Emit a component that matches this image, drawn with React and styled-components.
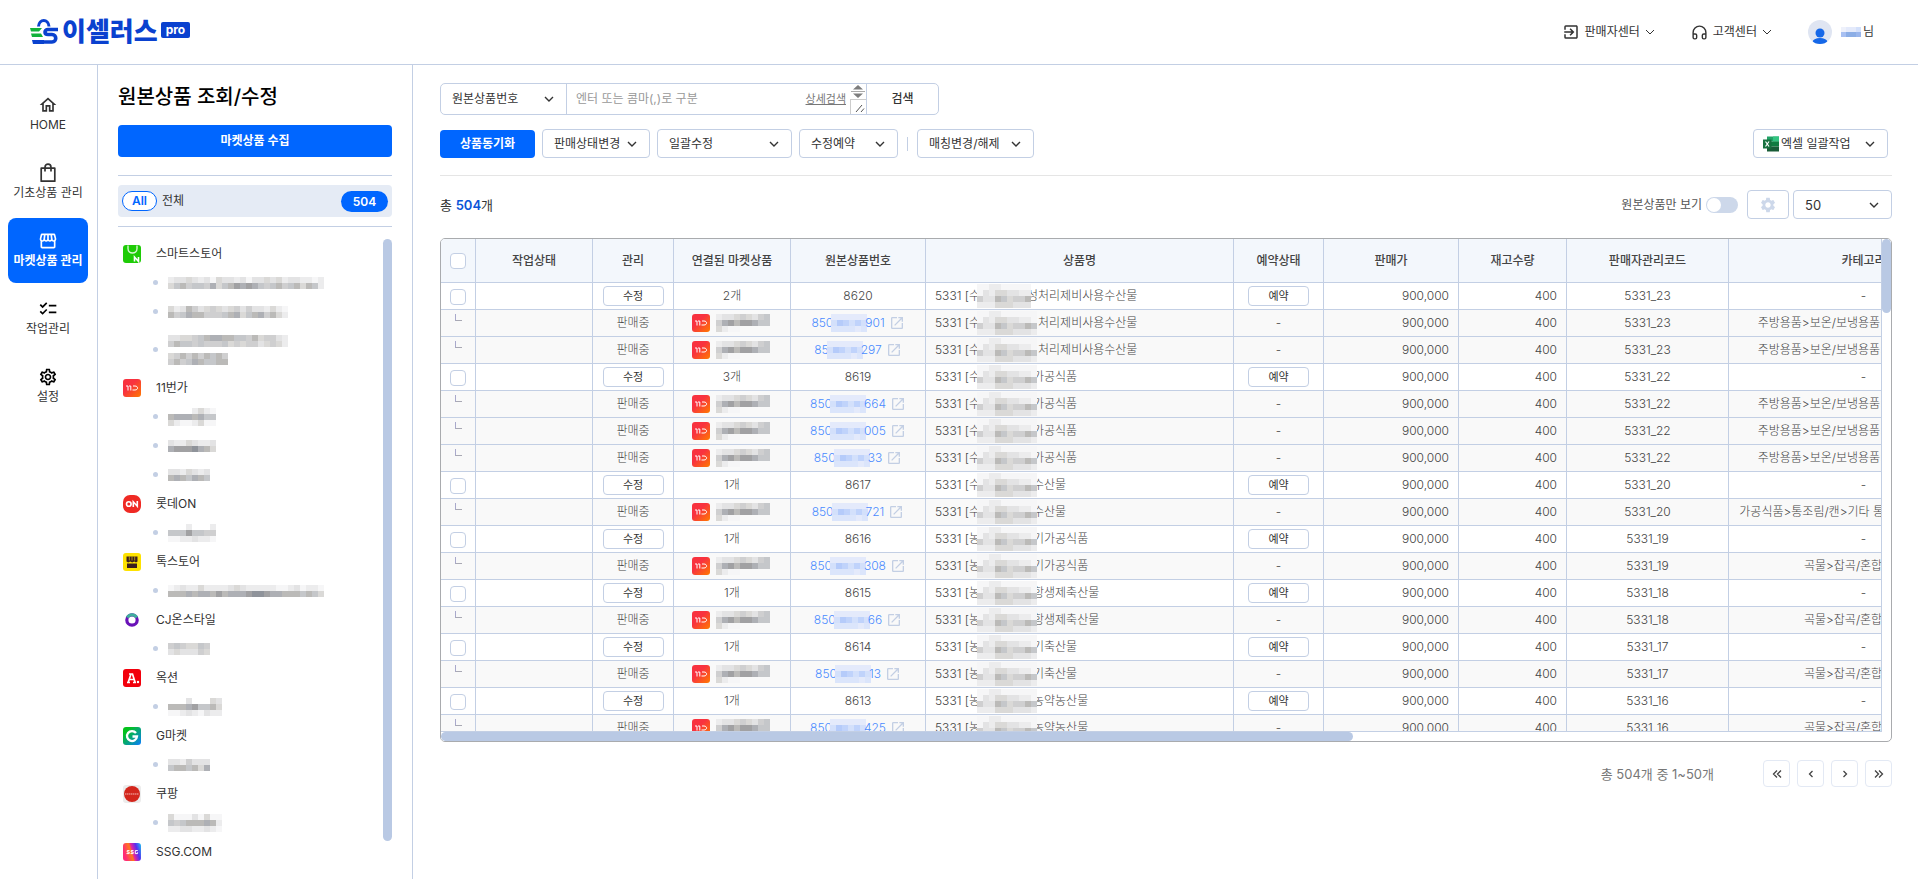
import React, { useState } from 'react'
import styled, { createGlobalStyle } from 'styled-components'
import {
  MdOutlineHome,
  MdOutlineStorefront,
  MdChecklist,
  MdOutlineSettings,
  MdExitToApp,
  MdOpenInNew,
  MdSettings,
} from 'react-icons/md'
import { Headphones } from 'lucide-react'

const grayTones = ['#f6f6f7', '#ececed', '#e3e3e4', '#dad9d7', '#cfcfd0', '#c5c7ca', '#bbbab8', '#aeb0b5', '#a1a1a3', '#8f939a']
const blueTones = ['#eef1fb', '#e4eafb', '#dbe5fb', '#d3e0fb', '#cbdafb', '#c0d3fb', '#b5cbfa', '#a8c0f2', '#9ab6ec', '#8caee6']

// 개인정보 가림용 모자이크
function Mosaic({ rows, tone, size = 6, label = '비공개' }) {
  const tones = tone === 'blue' ? blueTones : grayTones
  const width = Math.max(...rows.map((row) => row.length)) * size
  return (
    <svg width={width} height={rows.length * size} role="img" aria-label={label} shapeRendering="crispEdges">
      {rows.map((row, y) =>
        row.split('').map((cell, x) =>
          cell === ' ' ? null : (
            <rect key={`${x}-${y}`} x={x * size} y={y * size} width={size} height={size} fill={tones[Number(cell)]} />
          ),
        ),
      )}
    </svg>
  )
}

function Chevron({ thin }) {
  return (
    <svg width="10" height="6" viewBox="0 0 10 6" fill="none" aria-hidden="true">
      <path d="M1 1l4 4 4-4" stroke="#333" strokeWidth={thin ? 1 : 1.4} />
    </svg>
  )
}

function BagIcon() {
  return (
    <svg width="20" height="20" viewBox="0 0 20 20" fill="none" stroke="#333" strokeWidth="1.7" aria-hidden="true">
      <path d="M3.2 5.2h13.6v13H3.2z" strokeLinejoin="round" />
      <path d="M7 8.4V4.4c0-4.3 6-4.3 6 0v4" />
    </svg>
  )
}

function LogoMark() {
  return (
    <svg width="30" height="26" viewBox="0 0 30 26" fill="none" aria-hidden="true">
      <path d="M9.5 7.5C10 -0.5 19.5 -0.5 20 7.5" stroke="#0a41cf" strokeWidth="3" />
      <path d="M1 9h12l-3 3.5H2z" fill="#12b23a" />
      <path d="M2 14.5h10l2 3.5H3z" fill="#12b23a" />
      <path d="M3 21h12v4H4z" fill="#0a41cf" />
      <path d="M29 10.5H19c-4 0-4 5 0 5h4c5 0 5 7.5 0 7.5H5" stroke="#0a41cf" strokeWidth="3.6" />
    </svg>
  )
}

function ElevenIcon() {
  return (
    <svg width="18" height="18" viewBox="0 0 18 18" fill="none" aria-hidden="true">
      <defs>
        <linearGradient id="eleven" x1="0" y1="0" x2="1" y2="1">
          <stop offset="0.4" stopColor="#f8323f" />
          <stop offset="1" stopColor="#ff7a00" />
        </linearGradient>
      </defs>
      <rect width="18" height="18" rx="3" fill="url(#eleven)" />
      <path d="M3 7h2v4.5M6 7h1.8v4.5M10 7h2c3.4 0 3.4 4 0 4H9.500" stroke="#fff" strokeWidth="1" />
    </svg>
  )
}

function MarketIcon({ type }) {
  if (type === 'eleven') return <ElevenIcon />
  return (
    <svg width="18" height="18" viewBox="0 0 18 18" fill="none" aria-hidden="true">
      {type === 'smart' && (
        <>
          <rect width="18" height="18" rx="3" fill="#1ecb06" />
          <path d="M5 0.5v3c0 6 9 6 9 0v-3" stroke="#d5f7d0" strokeWidth="1.4" />
          <path d="M11.5 16.5v-4.5l4 4.5v-4.5" stroke="#fff" strokeWidth="1.6" />
        </>
      )}
      {type === 'lotte' && (
        <>
          <rect width="18" height="18" rx="7" fill="#ef2a24" />
          <circle cx="5.8" cy="9" r="2.3" stroke="#fff" strokeWidth="1.6" />
          <path d="M10.3 12V6.8l4 4.4V6" stroke="#fff" strokeWidth="1.6" />
        </>
      )}
      {type === 'talk' && (
        <>
          <rect width="18" height="18" rx="3" fill="#fee200" />
          <path d="M3.5 3.5h11v5l-1.5 1-1.8-1-2 1-2-1-2 1-1.7-1zM4 10.5h10v4.5H4z" fill="#3b1e1e" />
          <path d="M6.3 3.5v4M9 3.5v4M11.7 3.5v4" stroke="#fee200" strokeWidth="0.6" />
        </>
      )}
      {type === 'cj' && (
        <>
          <circle cx="9" cy="9" r="5.2" stroke="#6a12b8" strokeWidth="3.2" />
          <path d="M4.3 6.4a5.4 5.4 0 0 1 9.4 0" stroke="#3fae9d" strokeWidth="3" />
        </>
      )}
      {type === 'auction' && (
        <>
          <rect width="18" height="18" rx="3" fill="#f2000c" />
          <path d="M4 13.5h3M10 13.5h3M5.3 13l2.7-8h1.5l2.5 8M6.5 10.5h4M6 5h3" stroke="#fff" strokeWidth="1.7" />
          <circle cx="15" cy="13" r="1.2" fill="#fff" />
        </>
      )}
      {type === 'gmarket' && (
        <>
          <defs>
            <linearGradient id="gmarket" x1="0" y1="0" x2="1" y2="1">
              <stop offset="0.2" stopColor="#04c21c" />
              <stop offset="1" stopColor="#0a7cff" />
            </linearGradient>
          </defs>
          <rect width="18" height="18" rx="3" fill="url(#gmarket)" />
          <path d="M13 6a5 5 0 1 0 1 3.5H9.5" stroke="#fff" strokeWidth="2.3" />
        </>
      )}
      {type === 'coupang' && (
        <>
          <rect width="18" height="18" rx="3" fill="#ececec" />
          <circle cx="9" cy="9" r="8" fill="#d3261c" />
          <path d="M2 9h14" stroke="#f4b7b2" strokeWidth="1.2" strokeDasharray="1.5 0.5" />
        </>
      )}
      {type === 'ssg' && (
        <>
          <defs>
            <linearGradient id="ssg" x1="0" y1="0.3" x2="1" y2="0">
              <stop offset="0" stopColor="#ff2b77" />
              <stop offset="0.35" stopColor="#ff7a1a" />
              <stop offset="0.45" stopColor="#e8259d" />
              <stop offset="0.7" stopColor="#5b2df0" />
              <stop offset="1" stopColor="#1bc7f0" />
            </linearGradient>
          </defs>
          <rect width="18" height="18" rx="3" fill="url(#ssg)" />
          <path
            d="M6.500 7.600H4.200v1.500h2v1.500H3.500M10.500 7.600H8.200v1.500h2v1.500H7.500M14.800 7.600h-2.500v3h2.300V9.300"
            stroke="#fff"
            strokeWidth="1"
          />
        </>
      )}
    </svg>
  )
}

function ExcelIcon() {
  return (
    <svg width="16" height="16" viewBox="0 0 16 16" aria-hidden="true">
      <path d="M4 0.5h12v5H4z" fill="#21a366" />
      <path d="M10 0.5h6v5h-6z" fill="#33c481" />
      <path d="M4 5.5h12v5H4z" fill="#107c41" />
      <path d="M4 10.5h12v5H4z" fill="#185c37" />
      <path d="M0 3.5h8.5v9H0z" fill="#17703f" />
      <path d="M2.5 5.5l3.5 5M6 5.5l-3.5 5" stroke="#fff" strokeWidth="1.2" />
    </svg>
  )
}

function AvatarIcon() {
  return (
    <svg width="24" height="24" viewBox="0 0 24 24" aria-hidden="true">
      <clipPath id="avatar">
        <circle cx="12" cy="12" r="12" />
      </clipPath>
      <circle cx="12" cy="12" r="12" fill="#dfe5f2" />
      <g clipPath="url(#avatar)" fill="#1668e8">
        <circle cx="12" cy="13" r="4.5" />
        <ellipse cx="12" cy="22" rx="7.5" ry="4" />
      </g>
    </svg>
  )
}

const menus = [
  { label: 'HOME', icon: <MdOutlineHome size={20} /> },
  { label: '기초상품 관리', icon: <BagIcon /> },
  { label: '마켓상품 관리', icon: <MdOutlineStorefront size={20} />, active: true },
  { label: '작업관리', icon: <MdChecklist size={22} color="#000" /> },
  { label: '설정', icon: <MdOutlineSettings size={22} color="#000" /> },
]

const markets = [
  {
    name: '스마트스토어',
    type: 'smart',
    accounts: [
      ['12232120322120223231221101', '35645547356878754564563651'],
      ['31264234323424221310', '64576644456735674631'],
      ['22334567766554634421', '46554544453434423431', '3464646564'],
    ],
  },
  { name: '11번가', type: 'eleven', accounts: [['    1310', '67776755', '31001300'], ['21132112', '78889763'], ['2213212', '6765765']] },
  { name: '롯데ON', type: 'lotte', accounts: [['   1   1', '55585544', '00112110']] },
  { name: '톡스토어', type: 'talk', accounts: [['01211311112321111100120110', '66676776867778998776665653']] },
  { name: 'CJ온스타일', type: 'cj', accounts: [['4543354', '2322243']] },
  { name: '옥션', type: 'auction', accounts: [['   2   32', '666785563', '001210211']] },
  { name: 'G마켓', type: 'gmarket', accounts: [['2214222', '5665637']] },
  { name: '쿠팡', type: 'coupang', accounts: [['300020300', '545666761', '112211210']] },
  { name: 'SSG.COM', type: 'ssg', accounts: [] },
]

const kitchen = '주방용품>보온/보냉용품>보온/보냉도시락'
const canned = '가공식품>통조림/캔>기타 통조림/캔>기타 통조림'
const grain = '곡물>잡곡/혼합곡>기타'

const products = [
  { no: '8620', code: '5331_23', head: '수', tail: '성처리제비사용수산물', category: kitchen, links: [['850', '901'], ['85', '297']] },
  { no: '8619', code: '5331_22', head: '수', tail: '가공식품', category: kitchen, links: [['850', '664'], ['850', '005'], ['850', '33']] },
  { no: '8617', code: '5331_20', head: '수', tail: '수산물', category: canned, links: [['850', '721']] },
  { no: '8616', code: '5331_19', head: '농', tail: '기가공식품', category: grain, links: [['850', '308']] },
  { no: '8615', code: '5331_18', head: '농', tail: '항생제축산물', category: grain, links: [['850', '66']] },
  { no: '8614', code: '5331_17', head: '농', tail: '기축산물', category: grain, links: [['850', '13']] },
  { no: '8613', code: '5331_16', head: '농', tail: '농약농산물', category: grain, links: [['850', '425']] },
]

const columns = [
  { title: '작업상태', width: 117 },
  { title: '관리', width: 81 },
  { title: '연결된 마켓상품', width: 117 },
  { title: '원본상품번호', width: 135 },
  { title: '상품명', width: 308 },
  { title: '예약상태', width: 90 },
  { title: '판매가', width: 135 },
  { title: '재고수량', width: 108 },
  { title: '판매자관리코드', width: 162 },
  { title: '카테고리', width: 270 },
]

const nameMask = ['0011000000', '0213322110', '4226534465', '1113332221']
const shortNameMask = nameMask.map((row) => row.slice(0, 9))

function ProductName({ head, tail, sub }) {
  const long = tail.length > 8
  return (
    <NameCell>
      <span>5331 [{head}</span>
      <NameMask $overlap={long && sub ? 10 : 4}>
        <Mosaic rows={long && !sub ? shortNameMask : nameMask} />
      </NameMask>
      <span>{tail}</span>
    </NameCell>
  )
}

function ProductRows({ product }) {
  return (
    <>
      <Row>
        <Cell>
          <CheckBox type="checkbox" aria-label={`${product.no} 선택`} />
        </Cell>
        <Cell />
        <Cell>
          <CellButton type="button">수정</CellButton>
        </Cell>
        <Cell>{product.links.length}개</Cell>
        <Cell>{product.no}</Cell>
        <Cell $align="left">
          <ProductName head={product.head} tail={product.tail} />
        </Cell>
        <Cell>
          <CellButton type="button">예약</CellButton>
        </Cell>
        <Cell $align="right">900,000</Cell>
        <Cell $align="right">400</Cell>
        <Cell>{product.code}</Cell>
        <Cell>-</Cell>
      </Row>
      {product.links.map(([start, end]) => (
        <Row key={start + end} $sub>
          <Cell>
            <Branch />
          </Cell>
          <Cell />
          <Cell>판매중</Cell>
          <Cell>
            <Seller>
              <ElevenIcon />
              <Mosaic rows={['122343245', '478688755', '3100     ']} />
            </Seller>
          </Cell>
          <Cell>
            <OriginLink href="#">
              {start}
              <LinkMask>
                <Mosaic tone="blue" rows={['111111', '365353', '222212']} />
              </LinkMask>
              {end}
              <MdOpenInNew size={16} color="#c3cfe4" />
            </OriginLink>
          </Cell>
          <Cell $align="left">
            <ProductName head={product.head} tail={product.tail} sub />
          </Cell>
          <Cell>-</Cell>
          <Cell $align="right">900,000</Cell>
          <Cell $align="right">400</Cell>
          <Cell>{product.code}</Cell>
          <Cell>{product.category}</Cell>
        </Row>
      ))}
    </>
  )
}

function SelectField({ label, options, width, attached, size }) {
  return (
    <SelectBox $width={width} $attached={attached}>
      <Select aria-label={label} $size={size}>
        {options.map((option) => (
          <option key={option}>{option}</option>
        ))}
      </Select>
      <Chevron />
    </SelectBox>
  )
}

export default function App() {
  const [onlyOrigin, setOnlyOrigin] = useState(false)

  return (
    <Page>
      <GlobalStyle />
      <Header>
        <Logo href="#">
          <LogoMark />
          <strong>이셀러스</strong>
          <span>pro</span>
        </Logo>
        <HeaderMenu>
          <HeaderButton type="button">
            <MdExitToApp size={18} />
            판매자센터
            <Chevron thin />
          </HeaderButton>
          <HeaderButton type="button">
            <Headphones size={17} />
            고객센터
            <Chevron thin />
          </HeaderButton>
          <User>
            <AvatarIcon />
            <UserName>
              <Mosaic tone="blue" rows={['0113', '7998']} size={5} />님
            </UserName>
          </User>
        </HeaderMenu>
      </Header>

      <Body>
        <Nav>
          {menus.map((menu) => (
            <NavItem key={menu.label} href="#" $active={menu.active}>
              {menu.icon}
              <span>{menu.label}</span>
            </NavItem>
          ))}
        </Nav>

        <Side>
          <h1>원본상품 조회/수정</h1>
          <CollectButton type="button">마켓상품 수집</CollectButton>
          <AllBox>
            <AllButton type="button">
              <em>All</em>
              전체
              <strong>504</strong>
            </AllButton>
          </AllBox>
          <MarketArea>
            <MarketList>
              {markets.map((market) => (
                <li key={market.name}>
                  <MarketName>
                    <MarketIcon type={market.type} />
                    <span>{market.name}</span>
                  </MarketName>
                  {market.accounts.map((rows, index) => {
                    const folded = market.type === 'smart' && index === 2
                    return (
                      <Account key={index} $tall={folded}>
                        <Mosaic rows={folded ? rows.slice(0, 2) : rows} />
                        {folded && <Mosaic rows={[rows[2], '4645765566']} />}
                      </Account>
                    )
                  })}
                </li>
              ))}
            </MarketList>
            <SideThumb />
          </MarketArea>
        </Side>

        <Main>
          <SearchBar>
            <SelectField label="검색 조건" options={['원본상품번호']} width={126} attached />
            <SearchText aria-label="검색어" rows={1} placeholder="엔터 또는 콤마(,)로 구분" />
            <DetailLink href="#">상세검색</DetailLink>
            <Resizer>
              <svg width="16" height="30" viewBox="0 0 16 30" aria-hidden="true">
                <path d="M3 5.5L8 1l5 4.5zM3 9.5L8 14l5-4.5z" fill="#7d7d7d" />
                <path d="M1 7.5h14" stroke="#aaa" />
                <path d="M0 15.5h16M0.5 15v15" stroke="#ccc" />
                <path d="M6 28l6-7M11 28l3-3.5" stroke="#555" fill="none" />
              </svg>
            </Resizer>
            <SearchButton type="button">검색</SearchButton>
          </SearchBar>

          <Toolbar>
            <SyncButton type="button">상품동기화</SyncButton>
            <SelectField label="판매상태변경" options={['판매상태변경']} width={108} />
            <SelectField label="일괄수정" options={['일괄수정']} width={135} />
            <SelectField label="수정예약" options={['수정예약']} width={99} />
            <Divider />
            <SelectField label="매칭변경/해제" options={['매칭변경/해제']} width={117} />
            <ExcelButton type="button">
              <ExcelIcon />
              <span>엑셀 일괄작업</span>
              <Chevron />
            </ExcelButton>
          </Toolbar>

          <ListHeader>
            <Total>
              총 <strong>504</strong>개
            </Total>
            <ToggleLabel>
              원본상품만 보기
              <Toggle
                type="checkbox"
                role="switch"
                checked={onlyOrigin}
                onChange={(e) => setOnlyOrigin(e.target.checked)}
              />
            </ToggleLabel>
            <GearButton type="button" aria-label="설정">
              <MdSettings size={18} />
            </GearButton>
            <SelectField label="페이지당 개수" options={['50', '100']} width={99} size={13} />
          </ListHeader>

          <TableFrame>
            <TableScroll>
              <Table>
                <colgroup>
                  <Col $width={35} />
                  {columns.map((column) => (
                    <Col key={column.title} $width={column.width} />
                  ))}
                </colgroup>
                <thead>
                  <tr>
                    <HeadCell>
                      <CheckBox type="checkbox" aria-label="전체 선택" />
                    </HeadCell>
                    {columns.map((column) => (
                      <HeadCell key={column.title}>{column.title}</HeadCell>
                    ))}
                  </tr>
                </thead>
                <tbody>
                  {products.map((product) => (
                    <ProductRows key={product.no} product={product} />
                  ))}
                </tbody>
              </Table>
            </TableScroll>
            <VerticalTrack>
              <VerticalThumb />
            </VerticalTrack>
            <HorizontalTrack>
              <HorizontalThumb />
            </HorizontalTrack>
          </TableFrame>

          <Pagination aria-label="페이지">
            <p>총 504개 중 1~50개</p>
            <PageButton type="button" aria-label="처음">
              <svg width="10" height="10" viewBox="0 0 10 10"><path d="M5 1.5L1.5 5 5 8.5M9 1.5L5.5 5 9 8.5" /></svg>
            </PageButton>
            <PageButton type="button" aria-label="이전">
              <svg width="10" height="10" viewBox="0 0 10 10"><path d="M6.5 2L3.5 5l3 3" /></svg>
            </PageButton>
            <PageButton type="button" aria-label="다음">
              <svg width="10" height="10" viewBox="0 0 10 10"><path d="M3.5 2l3 3-3 3" /></svg>
            </PageButton>
            <PageButton type="button" aria-label="마지막">
              <svg width="10" height="10" viewBox="0 0 10 10"><path d="M1 1.5L4.5 5 1 8.5M5 1.5L8.5 5 5 8.5" /></svg>
            </PageButton>
          </Pagination>
        </Main>
      </Body>
    </Page>
  )
}

const GlobalStyle = createGlobalStyle`
  * {
    box-sizing: border-box;
  }
  body {
    margin: 0;
    background: white;
    color: #333;
    font-family: Inter, 'Noto Sans CJK KR', sans-serif;
    font-size: 12px;
    line-height: 18px;
  }
  h1, p, ul {
    margin: 0;
    padding: 0;
  }
  ul {
    list-style: none;
  }
  a {
    color: inherit;
    text-decoration: none;
  }
  button, select, textarea, input {
    margin: 0;
    color: inherit;
    font: inherit;
  }
  button {
    padding: 0;
    cursor: pointer;
  }
  svg {
    flex-shrink: 0;
  }
`

const Page = styled.div`
  height: 100vh;
  display: flex;
  flex-direction: column;
  overflow: hidden;
`

const Header = styled.header`
  height: 65px;
  padding: 0 44px 0 29px;
  border-bottom: 1px solid #c3cfe4;
  display: flex;
  align-items: center;
  justify-content: space-between;
  flex-shrink: 0;
`

const Logo = styled.a`
  display: flex;
  align-items: center;
  gap: 3px;
  color: #0a41cf;

  strong {
    font-size: 26px;
    line-height: 28px;
    font-weight: 900;
  }
  span {
    align-self: flex-start;
    margin-top: 4px;
    padding: 0 5px;
    border-radius: 2px;
    background: #0a41cf;
    color: white;
    font-size: 12px;
    line-height: 16px;
    font-weight: 700;
  }
`

const HeaderMenu = styled.div`
  display: flex;
  align-items: center;
  gap: 36px;
`

const HeaderButton = styled.button`
  border: none;
  background: none;
  display: flex;
  align-items: center;
  gap: 5px;
`

const User = styled.div`
  display: flex;
  align-items: center;
  gap: 9px;
`

const UserName = styled.span`
  display: flex;
  align-items: center;
  gap: 2px;
`

const Body = styled.div`
  flex: 1;
  min-height: 0;
  display: flex;
`

const Nav = styled.nav`
  width: 98px;
  padding: 17px 9px 0 8px;
  border-right: 1px solid #c3cfe4;
  display: flex;
  flex-direction: column;
  gap: 3px;
  flex-shrink: 0;
`

const NavItem = styled.a`
  height: 65px;
  padding-top: 13px;
  border-radius: 8px;
  display: flex;
  flex-direction: column;
  align-items: center;
  gap: 1px;
  background: ${(props) => (props.$active ? '#0066ff' : 'transparent')};
  color: ${(props) => (props.$active ? 'white' : '#333')};
  font-weight: ${(props) => (props.$active ? 700 : 400)};
  white-space: nowrap;

  svg {
    height: 20px;
  }
`

const Side = styled.aside`
  width: 315px;
  padding: 20px 20px 0;
  border-right: 1px solid #c3cfe4;
  display: flex;
  flex-direction: column;
  flex-shrink: 0;

  h1 {
    font-size: 20px;
    line-height: 24px;
    font-weight: 500;
    color: black;
  }
`

const CollectButton = styled.button`
  height: 32px;
  margin-top: 16px;
  border: none;
  border-radius: 4px;
  background: #0066ff;
  color: white;
  font-weight: 700;
  flex-shrink: 0;
`

const AllBox = styled.div`
  margin-top: 18px;
  padding: 9px 0;
  border-top: 1px solid #c3cfe4;
  border-bottom: 1px solid #c3cfe4;
`

const AllButton = styled.button`
  width: 100%;
  height: 32px;
  padding: 0 4px;
  border: none;
  border-radius: 4px;
  background: #e5ebf5;
  display: flex;
  align-items: center;
  gap: 5px;

  em {
    width: 35px;
    border: 1px solid #0066ff;
    border-radius: 10px;
    background: white;
    color: #0066ff;
    font-style: normal;
    font-weight: 600;
  }
  strong {
    width: 47px;
    margin-left: auto;
    border-radius: 11px;
    background: #0066ff;
    color: white;
    line-height: 21px;
    font-weight: 600;
  }
`

const MarketArea = styled.div`
  flex: 1;
  min-height: 0;
  padding-top: 12px;
  display: flex;
  justify-content: space-between;
`

const MarketList = styled.ul`
  padding-left: 5px;
  overflow: hidden;
`

const MarketName = styled.div`
  height: 29px;
  display: flex;
  align-items: center;
  gap: 15px;
`

const Account = styled.div`
  height: ${(props) => (props.$tall ? 47 : 29)}px;
  padding-left: 30px;
  display: grid;
  grid-template-columns: 15px auto;
  align-items: center;
  align-content: center;
  justify-content: start;
  row-gap: 6px;

  &::before {
    content: '';
    width: 5px;
    height: 5px;
    border-radius: 50%;
    background: #c3cfe4;
    grid-row: ${(props) => (props.$tall ? '1 / 3' : '1')};
  }
`

const SideThumb = styled.div`
  width: 9px;
  height: 94%;
  border-radius: 5px;
  background: #b9c9e4;
`

const Main = styled.main`
  flex: 1;
  min-width: 0;
  padding: 18px 26px 0 27px;
`

const SearchBar = styled.div`
  width: 499px;
  height: 32px;
  border: 1px solid #c3cfe4;
  border-radius: 5px;
  display: flex;
  align-items: stretch;
`

const SearchText = styled.textarea`
  flex: 1;
  min-width: 0;
  padding: 6px 9px;
  border: none;
  outline: none;
  background: none;
  resize: none;
  overflow: hidden;

  &::placeholder {
    color: #999;
  }
`

const DetailLink = styled.a`
  align-self: center;
  margin-right: 4px;
  color: #777;
  font-size: 11px;
  text-decoration: underline;
`

const Resizer = styled.span`
  width: 17px;
  border-right: 1px solid #c3cfe4;
  display: flex;
`

const SearchButton = styled.button`
  width: 71px;
  border: none;
  background: none;
  font-weight: 500;
`

const SelectBox = styled.div`
  width: ${(props) => props.$width}px;
  height: ${(props) => (props.$attached ? 'auto' : '29px')};
  border: solid #c3cfe4;
  border-width: ${(props) => (props.$attached ? '0 1px 0 0' : '1px')};
  border-radius: ${(props) => (props.$attached ? '0' : '4px')};
  display: grid;
  align-items: center;
  flex-shrink: 0;

  svg {
    grid-area: 1 / 1;
    justify-self: end;
    margin-right: 12px;
    pointer-events: none;
  }
`

const Select = styled.select`
  grid-area: 1 / 1;
  width: 100%;
  height: 100%;
  padding: 0 24px 0 11px;
  border: none;
  outline: none;
  background: none;
  appearance: none;
  font-size: ${(props) => props.$size || 12}px;
`

const Toolbar = styled.div`
  margin-top: 14px;
  padding-bottom: 17px;
  border-bottom: 1px solid #e5e5e5;
  display: flex;
  align-items: center;
  gap: 7px;
`

const SyncButton = styled.button`
  width: 95px;
  height: 28px;
  border: none;
  border-radius: 4px;
  background: #0066ff;
  color: white;
  font-weight: 700;
`

const Divider = styled.span`
  width: 1px;
  height: 14px;
  margin: 0 2px;
  background: #c3cfe4;
`

const ExcelButton = styled.button`
  width: 135px;
  height: 29px;
  margin: 0 4px 0 auto;
  padding: 0 12px 0 9px;
  border: 1px solid #c3cfe4;
  border-radius: 4px;
  background: white;
  display: flex;
  align-items: center;
  gap: 2px;

  span {
    flex: 1;
    text-align: left;
  }
`

const ListHeader = styled.div`
  padding: 14px 0 19px;
  display: flex;
  align-items: center;
`

const Total = styled.p`
  margin-right: auto;
  font-size: 13px;

  strong {
    color: #0a55d8;
    font-weight: 600;
  }
`

const ToggleLabel = styled.label`
  display: flex;
  align-items: center;
  gap: 4px;
  color: #555;
`

const Toggle = styled.input`
  width: 32px;
  height: 16px;
  padding: 1px;
  border-radius: 8px;
  background: ${(props) => (props.checked ? '#0066ff' : '#cdd8ea')};
  appearance: none;
  display: flex;
  justify-content: ${(props) => (props.checked ? 'flex-end' : 'flex-start')};

  &::before {
    content: '';
    width: 14px;
    height: 14px;
    border-radius: 50%;
    background: white;
  }
`

const GearButton = styled.button`
  width: 42px;
  height: 29px;
  margin: 0 4px 0 9px;
  border: 1px solid #c3cfe4;
  border-radius: 4px;
  background: white;
  color: #cdd8ea;
  display: flex;
  align-items: center;
  justify-content: center;
`

const TableFrame = styled.div`
  height: calc(100vh - 375px);
  border: 1px solid #a9abae;
  border-radius: 5px;
  display: grid;
  grid-template-columns: minmax(0, 1fr) 9px;
  grid-template-rows: minmax(0, 1fr) 9px;
  overflow: hidden;
`

const TableScroll = styled.div`
  border: solid #c3cfe4;
  border-width: 0 1px 1px 0;
  overflow: hidden;
`

const VerticalTrack = styled.div`
  background: white;
`

const VerticalThumb = styled.div`
  height: 15%;
  border-radius: 5px;
  background: #b9c9e4;
`

const HorizontalTrack = styled.div`
  background: white;
`

const HorizontalThumb = styled.div`
  width: 63.3%;
  height: 100%;
  border-radius: 5px;
  background: #b9c9e4;
`

const Table = styled.table`
  width: 1558px;
  table-layout: fixed;
  border-collapse: separate;
  border-spacing: 0;
`

const Col = styled.col`
  width: ${(props) => props.$width}px;
`

const HeadCell = styled.th`
  height: 44px;
  padding: 0;
  border: solid #c3cfe4;
  border-width: 0 1px 1px 0;
  background: #f3f7fc;
  font-weight: 500;
  color: #444;
`

const Row = styled.tr`
  background: ${(props) => (props.$sub ? '#f9f9f9' : 'white')};
`

const Cell = styled.td`
  height: 27px;
  padding: 0 9px;
  border: solid #c3cfe4;
  border-width: 0 1px 1px 0;
  color: #444;
  font-weight: 300;
  line-height: 18px;
  text-align: ${(props) => props.$align || 'center'};
  white-space: nowrap;
`

const CheckBox = styled.input`
  width: 16px;
  height: 16px;
  border: 1px solid #c3cfe4;
  border-radius: 4px;
  background: white;
  appearance: none;
  vertical-align: middle;

  &:checked {
    background: #0066ff;
  }
`

const CellButton = styled.button`
  width: 61px;
  height: 20px;
  border: 1px solid #c3cfe4;
  border-radius: 4px;
  background: white;
  color: #333;
  font-size: 11px;
  font-weight: 400;
  line-height: 16px;
  display: block;
  margin: 0 auto;
`

const Branch = styled.span`
  width: 7px;
  height: 7px;
  margin: 0 auto;
  margin-bottom: 12px;
  border-left: 1px solid #a9a9cc;
  border-bottom: 1px solid #a9a9b4;
  display: block;
`

const Seller = styled.span`
  padding-left: 9px;
  display: flex;
  align-items: center;
  gap: 6px;
`

const OriginLink = styled.a`
  color: #4a8bff;
  display: flex;
  align-items: center;
  justify-content: center;

  & > svg {
    margin-left: 4px;
  }
`

const LinkMask = styled.span`
  margin: 0 -2px;
  display: flex;
`

const NameCell = styled.span`
  display: flex;
  align-items: center;
`

const NameMask = styled.span`
  margin-left: -3px;
  margin-right: -${(props) => props.$overlap}px;
  display: flex;
  z-index: 1;
`

const Pagination = styled.nav`
  padding-top: 18px;
  display: flex;
  align-items: center;
  justify-content: flex-end;
  gap: 7px;

  p {
    margin-right: 42px;
    color: #777;
    font-size: 13px;
  }
`

const PageButton = styled.button`
  width: 27px;
  height: 27px;
  border: 1px solid #e3e9f4;
  border-radius: 4px;
  background: white;
  display: flex;
  align-items: center;
  justify-content: center;

  path {
    fill: none;
    stroke: #444;
    stroke-width: 1.3;
  }
`
